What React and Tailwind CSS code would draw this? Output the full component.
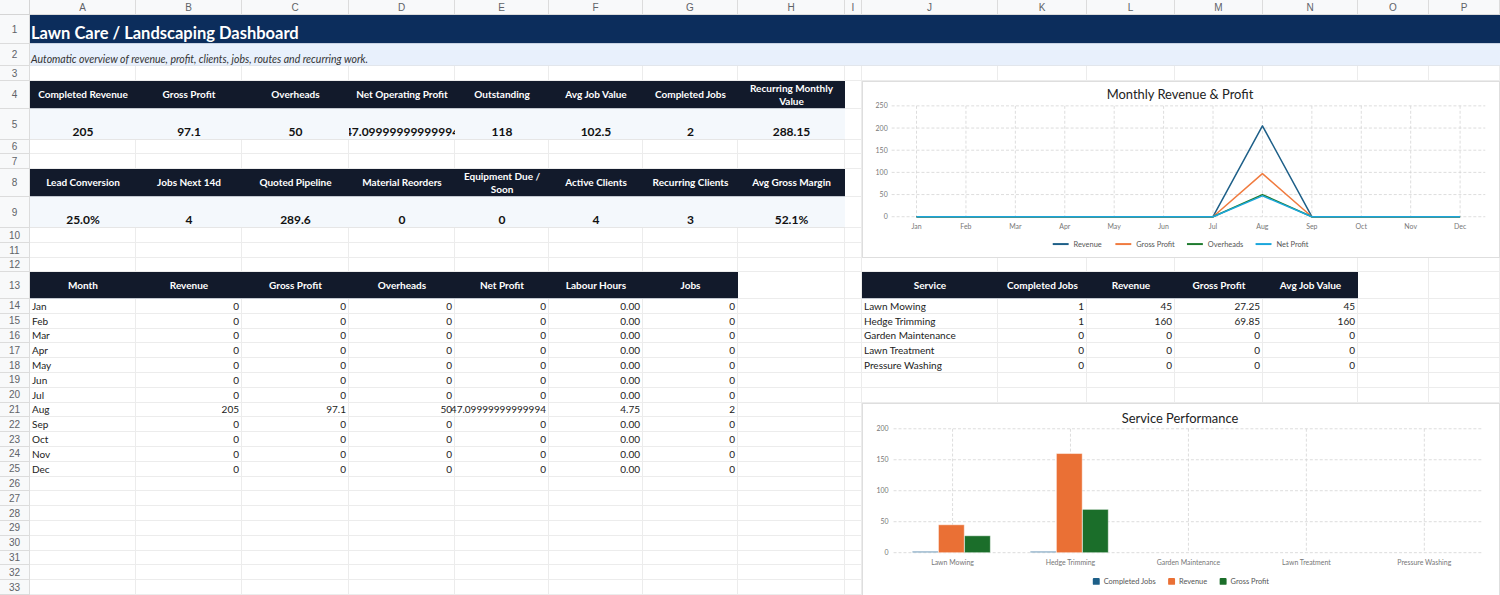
import React from "react";

const COL_LETTERS = ["A", "B", "C", "D", "E", "F", "G", "H", "I", "J", "K", "L", "M", "N", "O", "P"];
const ROW_COUNT = 34;

const KPI_TOP = [
  ["Completed Revenue", "205"],
  ["Gross Profit", "97.1"],
  ["Overheads", "50"],
  ["Net Operating Profit", "47.09999999999994"],
  ["Outstanding", "118"],
  ["Avg Job Value", "102.5"],
  ["Completed Jobs", "2"],
  ["Recurring Monthly Value", "288.15"],
];

const KPI_BOTTOM = [
  ["Lead Conversion", "25.0%"],
  ["Jobs Next 14d", "4"],
  ["Quoted Pipeline", "289.6"],
  ["Material Reorders", "0"],
  ["Equipment Due / Soon", "0"],
  ["Active Clients", "4"],
  ["Recurring Clients", "3"],
  ["Avg Gross Margin", "52.1%"],
];

const MONTH_HEAD = ["Month", "Revenue", "Gross Profit", "Overheads", "Net Profit", "Labour Hours", "Jobs"];
const MONTH_LABELS = ["Jan", "Feb", "Mar", "Apr", "May", "Jun", "Jul", "Aug", "Sep", "Oct", "Nov", "Dec"];
const MONTH_ROWS = MONTH_LABELS.map((m) =>
  m === "Aug"
    ? [m, "205", "97.1", "50", "47.09999999999994", "4.75", "2"]
    : [m, "0", "0", "0", "0", "0.00", "0"]
);

const SERVICE_HEAD = ["Service", "Completed Jobs", "Revenue", "Gross Profit", "Avg Job Value"];
const SERVICE_ROWS = [
  ["Lawn Mowing", "1", "45", "27.25", "45"],
  ["Hedge Trimming", "1", "160", "69.85", "160"],
  ["Garden Maintenance", "0", "0", "0", "0"],
  ["Lawn Treatment", "0", "0", "0", "0"],
  ["Pressure Washing", "0", "0", "0", "0"],
];

const LINE_SERIES = [
  { name: "Revenue", color: "#1d5f88", aug: 205, legendX: 190 },
  { name: "Gross Profit", color: "#f07b3f", aug: 97.1, legendX: 253 },
  { name: "Overheads", color: "#1e7b2e", aug: 50, legendX: 325 },
  { name: "Net Profit", color: "#1aa6dc", aug: 47.1, legendX: 394 },
];

const BAR_SERIES = [
  { name: "Completed Jobs", color: "#1d5f88", legendX: 230 },
  { name: "Revenue", color: "#ea7035", legendX: 306 },
  { name: "Gross Profit", color: "#1b6e2a", legendX: 358 },
];

const CELL = {
  corner: "bg-[#f8f9fa] border-r border-b border-[#d5d5d5]",
  colHead:
    "bg-[#f8f9fa] border-r border-b border-[#dcdcdc] flex items-center justify-center text-[10px] text-[#5f6368] font-['Liberation_Sans',sans-serif]",
  rowHead:
    "bg-[#f8f9fa] border-r border-b border-[#dcdcdc] flex items-center justify-center text-[10px] text-[#5f6368] font-['Liberation_Sans',sans-serif]",
  blank: "bg-white border-r border-b border-[#ececec]",
  darkHead:
    "bg-[#121a2b] border-b border-[#c3c8d0] flex items-center justify-center text-center text-white font-bold text-[10px] leading-[13px] px-1",
  kpiVal:
    "bg-[#f4f8fc] border-b border-[#e6e6e6] flex items-end justify-center font-bold text-[12px] leading-[15px] text-[#111] whitespace-nowrap overflow-hidden",
  text: "bg-white border-r border-b border-[#ececec] flex items-end px-[2px] text-[10px] leading-[14px] text-[#222] whitespace-nowrap",
  num: "bg-white border-r border-b border-[#ececec] flex items-end justify-end px-[2px] text-[10px] leading-[14px] text-[#222] whitespace-nowrap",
};

// which cells sit under a merged title or a chart
function isCovered(r, c) {
  if (r === 0 || c === 0) return false;
  if (r === 1 || r === 2) return true;
  if (c >= 10 && r >= 4 && r <= 11) return true;
  if (c >= 10 && r >= 21) return true;
  return false;
}

function describe(r, c) {
  if (r === 0 && c === 0) return { kind: "corner" };
  if (r === 0) return { kind: "colHead", text: COL_LETTERS[c - 1] };
  if (c === 0) return { kind: "rowHead", text: String(r) };
  if (r === 4 && c <= 8) return { kind: "darkHead", text: KPI_TOP[c - 1][0] };
  if (r === 5 && c <= 8) return { kind: "kpiVal", text: KPI_TOP[c - 1][1] };
  if (r === 8 && c <= 8) return { kind: "darkHead", text: KPI_BOTTOM[c - 1][0] };
  if (r === 9 && c <= 8) return { kind: "kpiVal", text: KPI_BOTTOM[c - 1][1] };
  if (r === 13 && c <= 7) return { kind: "darkHead", text: MONTH_HEAD[c - 1] };
  if (r === 13 && c >= 10 && c <= 14) return { kind: "darkHead", text: SERVICE_HEAD[c - 10] };
  if (r >= 14 && r <= 25 && c <= 7) {
    const row = MONTH_ROWS[r - 14];
    return { kind: c === 1 ? "text" : "num", text: row[c - 1] };
  }
  if (r >= 14 && r <= 18 && c >= 10 && c <= 14) {
    const row = SERVICE_ROWS[r - 14];
    return { kind: c === 10 ? "text" : "num", text: row[c - 10] };
  }
  return { kind: "blank" };
}

function RevenueChart() {
  const x = (i) => 53 + i * 49.7;
  const y = (v) => 135.5 - v * 0.446;
  return (
    <svg viewBox="0 0 638 176" className="block w-full h-full">
      <text x="318" y="17" textAnchor="middle" fontSize="13" fill="#222">
        Monthly Revenue &amp; Profit
      </text>
      {[0, 50, 100, 150, 200, 250].map((v) => (
        <g key={v}>
          <line x1="28" x2="625" y1={y(v)} y2={y(v)} stroke="#d4d4d4" strokeWidth="0.8" strokeDasharray="3 2" />
          <text x="24" y={y(v) + 2.5} textAnchor="end" fontSize="7" fill="#777">
            {v}
          </text>
        </g>
      ))}
      {MONTH_LABELS.map((m, i) => (
        <g key={m}>
          <line x1={x(i)} x2={x(i)} y1={y(250)} y2={y(0)} stroke="#d4d4d4" strokeWidth="0.8" strokeDasharray="3 2" />
          <text x={x(i)} y="147.5" textAnchor="middle" fontSize="7" fill="#777">
            {m}
          </text>
        </g>
      ))}
      {LINE_SERIES.map((s) => (
        <polyline
          key={s.name}
          fill="none"
          stroke={s.color}
          strokeWidth="1.5"
          strokeLinejoin="round"
          points={MONTH_LABELS.map((_, i) => `${x(i)},${y(i === 7 ? s.aug : 0)}`).join(" ")}
        />
      ))}
      {/* legend */}
      {LINE_SERIES.map((s) => (
        <g key={s.name}>
          <line x1={s.legendX} x2={s.legendX + 16} y1="163" y2="163" stroke={s.color} strokeWidth="2" />
          <text x={s.legendX + 21} y="165.5" fontSize="7.5" fill="#555">
            {s.name}
          </text>
        </g>
      ))}
    </svg>
  );
}

function ServiceChart() {
  const y = (v) => 150 - v * 0.625;
  const cx = (i) => 88.5 + i * 119;
  return (
    <svg viewBox="0 0 638 207" className="block w-full h-full">
      <text x="318" y="19" textAnchor="middle" fontSize="13" fill="#222">
        Service Performance
      </text>
      {[0, 50, 100, 150, 200].map((v) => (
        <g key={v}>
          <line x1="29" x2="624" y1={y(v)} y2={y(v)} stroke="#d4d4d4" strokeWidth="0.8" strokeDasharray="3 2" />
          <text x="24" y={y(v) + 2.5} textAnchor="end" fontSize="7" fill="#777">
            {v}
          </text>
        </g>
      ))}
      {SERVICE_ROWS.map((row, i) => (
        <g key={row[0]}>
          <line x1={cx(i)} x2={cx(i)} y1={y(200)} y2={y(0)} stroke="#d4d4d4" strokeWidth="0.8" strokeDasharray="3 2" />
          <text x={cx(i)} y="162.5" textAnchor="middle" fontSize="7" fill="#777">
            {row[0]}
          </text>
          {[row[1], row[2], row[3]].map((val, j) => {
            const v = Number(val);
            if (!v) return null;
            const bx = cx(i) - 40.5 + j * 26.3;
            if (j === 0) {
              return <rect key={j} x={bx} y={y(0) - 1.5} width="26" height="1.5" fill="#9dbbd0" />;
            }
            return (
              <rect
                key={j}
                x={bx}
                y={y(v)}
                width="26"
                height={v * 0.625}
                fill={BAR_SERIES[j].color}
                stroke="#ffffff"
                strokeOpacity="0.45"
                strokeWidth="1"
              />
            );
          })}
        </g>
      ))}
      {/* legend */}
      {BAR_SERIES.map((s) => (
        <g key={s.name}>
          <rect x={s.legendX} y="175.5" width="7" height="7" rx="1" fill={s.color} />
          <text x={s.legendX + 11} y="181.5" fontSize="7.5" fill="#555">
            {s.name}
          </text>
        </g>
      ))}
    </svg>
  );
}

export default function App() {
  const cells = [];
  for (let r = 0; r <= ROW_COUNT; r++) {
    for (let c = 0; c <= 16; c++) {
      if (isCovered(r, c)) continue;
      const cell = describe(r, c);
      cells.push(
        <div key={`${r}-${c}`} className={CELL[cell.kind]}>
          {cell.text}
        </div>
      );
    }
  }

  return (
    <div className="w-[1500px] h-[595px] overflow-hidden bg-white font-['Lato',sans-serif]">
      <div className="grid grid-cols-[30px_106px_106px_107px_106px_94px_94px_95px_107px_17px_136px_89px_88px_88px_95px_71px_71px] grid-rows-[15px_29px_22px_15px_28px_31px_14px_15px_28px_31px_15px_15px_14px_27px_repeat(21,14.8px)]">
        {/* Title */}
        <div className="col-start-2 col-end-18 row-start-2 row-end-3 bg-[#0c2d5c] border-b border-[#c9d3e3] flex items-end pl-[1px] pb-[2px] text-white font-bold text-[16.5px] leading-[16px]">
          Lawn Care / Landscaping Dashboard
        </div>
        {/* Subtitle */}
        <div className="col-start-2 col-end-18 row-start-3 row-end-4 bg-[#e8f0fc] border-b border-[#e2e6ec] flex items-end pl-[1px] italic text-[10.5px] leading-[12px] text-[#333]">
          Automatic overview of revenue, profit, clients, jobs, routes and recurring work.
        </div>
        {/* Monthly chart */}
        <div className="col-start-11 col-end-18 row-start-5 row-end-13 bg-white border border-[#dedede]">
          <RevenueChart />
        </div>
        {/* Service chart */}
        <div className="col-start-11 col-end-18 row-start-22 row-end-36 bg-white border border-[#dedede]">
          <ServiceChart />
        </div>
        {cells}
      </div>
    </div>
  );
}
